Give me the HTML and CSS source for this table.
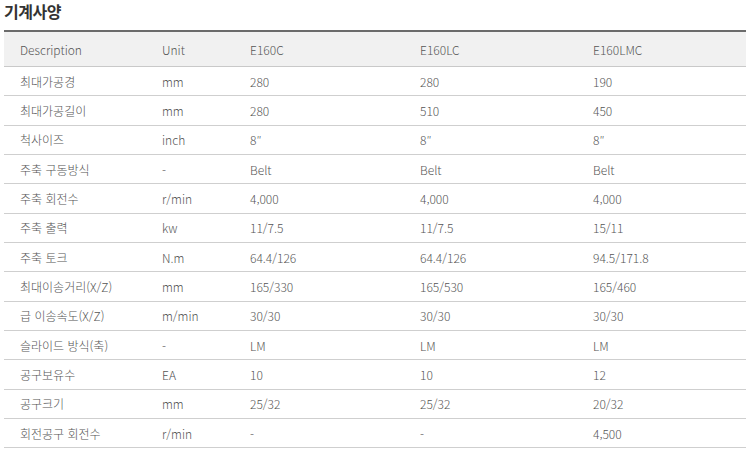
FILE: index.html
```html
<!DOCTYPE html>
<html lang="ko">
<head>
<meta charset="utf-8">
<title>기계사양</title>
<link rel="stylesheet" href="styles.css">
</head>
<body>
<div class="page">
  <h2 class="title">기계사양</h2>
  <table class="spec">
    <colgroup>
      <col class="c1"><col class="c2"><col class="c3"><col class="c4"><col class="c5">
    </colgroup>
    <thead>
      <tr><th>Description</th><th>Unit</th><th>E160C</th><th>E160LC</th><th>E160LMC</th></tr>
    </thead>
    <tbody>
      <tr><td>최대가공경</td><td>mm</td><td>280</td><td>280</td><td>190</td></tr>
      <tr><td>최대가공길이</td><td>mm</td><td>280</td><td>510</td><td>450</td></tr>
      <tr><td>척사이즈</td><td>inch</td><td>8″</td><td>8″</td><td>8″</td></tr>
      <tr><td>주축 구동방식</td><td>-</td><td>Belt</td><td>Belt</td><td>Belt</td></tr>
      <tr><td>주축 회전수</td><td>r/min</td><td>4,000</td><td>4,000</td><td>4,000</td></tr>
      <tr><td>주축 출력</td><td>kw</td><td>11/7.5</td><td>11/7.5</td><td>15/11</td></tr>
      <tr><td>주축 토크</td><td>N.m</td><td>64.4/126</td><td>64.4/126</td><td>94.5/171.8</td></tr>
      <tr><td>최대이송거리(X/Z)</td><td>mm</td><td>165/330</td><td>165/530</td><td>165/460</td></tr>
      <tr><td>급 이송속도(X/Z)</td><td>m/min</td><td>30/30</td><td>30/30</td><td>30/30</td></tr>
      <tr><td>슬라이드 방식(축)</td><td>-</td><td>LM</td><td>LM</td><td>LM</td></tr>
      <tr><td>공구보유수</td><td>EA</td><td>10</td><td>10</td><td>12</td></tr>
      <tr><td>공구크기</td><td>mm</td><td>25/32</td><td>25/32</td><td>20/32</td></tr>
      <tr><td>회전공구 회전수</td><td>r/min</td><td>-</td><td>-</td><td>4,500</td></tr>
    </tbody>
  </table>
</div>
</body>
</html>
```
FILE: styles.css
```css
html, body {
  margin: 0;
  padding: 0;
  background: #fff;
}
.page {
  padding: 0 4px;
  font-family: "Noto Sans CJK KR", "Open Sans", sans-serif;
  color: #555;
}
.title {
  margin: 0;
  height: 30px;
  padding-top: 1px;
  box-sizing: border-box;
  font-family: "Noto Sans CJK KR", sans-serif;
  font-size: 16px;
  font-weight: 700;
  line-height: 20px;
  letter-spacing: -0.5px;
  color: #333;
}
.spec {
  width: 742px;
  border-collapse: collapse;
  table-layout: fixed;
  border-top: 2px solid #6b6b6b;
  font-size: 12px;
  font-weight: 300;
}
.c1 { width: 142px; }
.c2 { width: 88px; }
.c3 { width: 170px; }
.c4 { width: 173px; }
.c5 { width: 169px; }
.spec th {
  height: 34px;
  padding: 0 0 0 16px;
  background: #f1f1f1;
  border-bottom: 1px solid #c9c9c9;
  text-align: left;
  font-weight: 300;
  color: #555;
}
.spec td {
  height: 28.33px;
  padding: 0 0 0 16px;
  border-bottom: 1px solid #cfcfcf;
  text-align: left;
  white-space: nowrap;
}
```
